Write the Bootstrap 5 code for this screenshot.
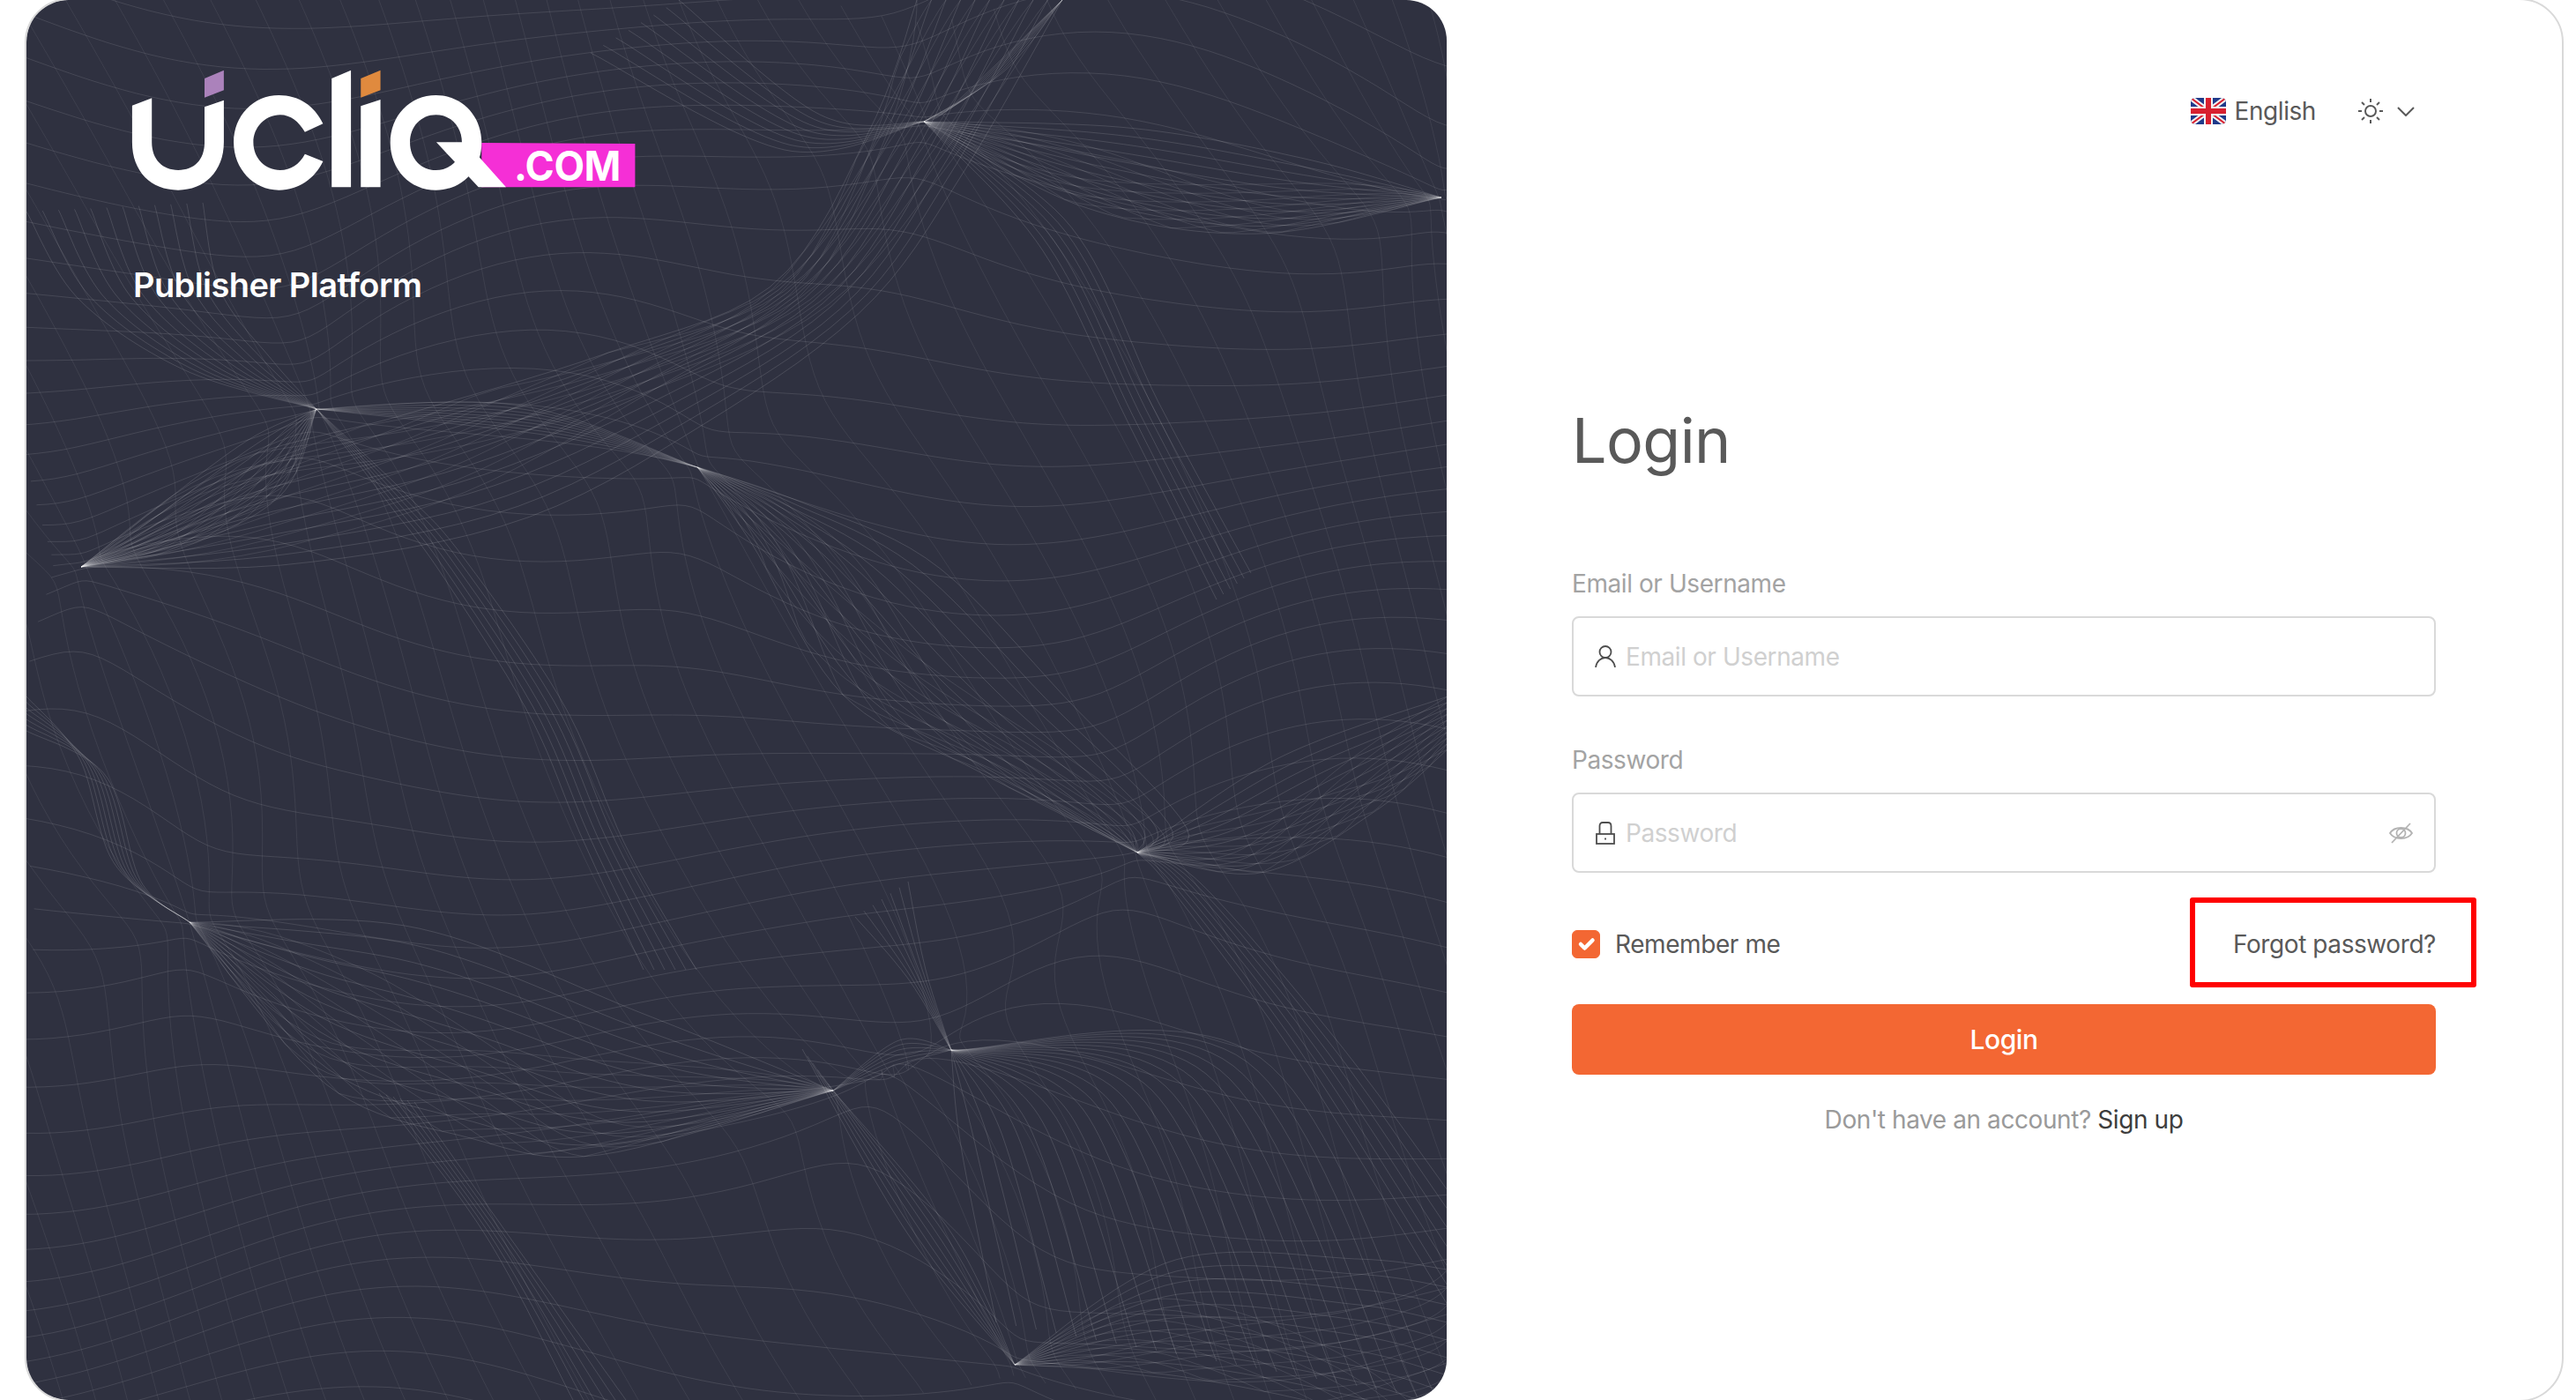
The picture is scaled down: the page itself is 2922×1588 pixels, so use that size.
<!DOCTYPE html>
<html lang="en">
<head>
  <meta charset="UTF-8">
  <meta name="viewport" content="width=device-width, initial-scale=1">
  <title>Ucliq.com - Publisher Platform</title>
  <link href="https://cdn.jsdelivr.net/npm/bootstrap@5.3.0/dist/css/bootstrap.min.css" rel="stylesheet">
  <style>
    html, body { height: 100%; overflow: hidden; }
    body { font-family: "Inter", "Liberation Sans", sans-serif; font-size: 28px; letter-spacing: -.42px; color: #595959; background: #fff; }
    .login-frame {
      width: 2880px; height: 1592px; margin: -2px 0 0 28px;
      border: 2px solid #d9d9d9; border-radius: 50px; overflow: hidden;
    }
    .brand-panel {
      width: 1611px; flex: none; background: #2f3140; border-radius: 46px;
      padding: 78px 0 0 119px; overflow: hidden;
    }
    .brand-mesh { left: 0; top: 0; }
    .brand-logo { display: block; margin-bottom: 83px; }
    .brand-title { font-size: 38px; font-weight: 600; line-height: 1.2; letter-spacing: -.58px; color: #fff; margin: 0 0 0 2px; }
    .login-side { flex: 1 1 auto; min-width: 0; }
    .login-top { height: 52px; margin-top: 100px; padding-right: 167px; }
    .flag-icon { border-radius: 5px; margin-right: 9px; }
    .theme-switch { margin-left: 48px; gap: 16px; }
    .login-form { width: 980px; margin-left: 142px; }
    .login-title { font-size: 70px; font-weight: 400; line-height: 80px; letter-spacing: -.6px; color: #595959; margin: 308px 0 105px; }
    .field-label { line-height: 34px; color: #a3a3a3; margin-bottom: 20px; }
    .login-field {
      height: 91px; border: 2px solid #d9d9d9; border-radius: 8px;
      padding: 0 24px; gap: 11px; margin-bottom: 55px;
    }
    .login-field.last-field { margin-bottom: 64px; }
    .login-field .form-control { font-size: 28px; letter-spacing: -.42px; color: #595959; background: transparent; }
    .login-field .form-control::placeholder { color: #d0d0d0; opacity: 1; }
    .remember-row { height: 34px; margin-bottom: 51px; }
    .remember-row .form-check { min-height: 0; padding: 0; margin: 0; gap: 17px; }
    .remember-row .form-check-input {
      width: 32px; height: 32px; margin: 0; float: none; border-radius: 6px;
      background-color: #f36733; border-color: #f36733; box-shadow: none;
    }
    .remember-row .form-check-label { line-height: 34px; color: #595959; }
    .forgot-link { color: #595959; text-decoration: none; line-height: 34px; }
    .note-box {
      position: absolute; left: -49px; right: -46px; top: -36px; bottom: -32px;
      border: 6px solid #f00; border-radius: 3px; pointer-events: none;
    }
    .login-btn {
      height: 80px; font-size: 30px; font-weight: 500; letter-spacing: -.42px; color: #fff;
      background: #f36733; border: 0; border-radius: 8px; margin-bottom: 34px;
    }
    .login-btn:hover { background: #f36733; color: #fff; }
    .signup-line { line-height: 34px; color: #9a9a9a; }
    .signup-line a { color: #3d3d3d; text-decoration: none; }
  </style>
</head>
<body>
  <div class="login-frame d-flex">
    <div class="brand-panel position-relative">
      <svg id="mesh" class="brand-mesh position-absolute" width="1611" height="1588" viewBox="0 0 1611 1588" fill="none" aria-hidden="true"></svg>

      <!-- logo, traced off the reference -->
      <svg class="brand-logo position-relative" width="574" height="140" viewBox="0 0 574 140" role="img" aria-label="ucliq.com">
        <g transform="scale(.4464 .3333) translate(-110 -115)">
          <polygon fill="#f52fd6" points="1000,367 1390,370 1390,518 1000,518"/>
          <path fill="#fff" d="M112 240 162 215V365C162 425 190 460 229 460 270 460 296 425 296 365V245L345 222V365C345 465 295 528 229 528 160 528 112 465 112 365Z"/>
          <polygon fill="#ab82bb" points="296,148 345,120 345,188 296,213"/>
          <path fill="#fff" d="M597 302 551 330C535 295 515 272 488 272 450 272 420 315 420 365 420 420 450 460 488 460 515 460 537 440 551 405L597 430C575 490 535 528 485 528 420 528 370 455 370 365 370 275 420 205 485 205 535 205 575 240 597 302Z"/>
          <polygon fill="#fff" points="619,148 668,120 668,518 619,518"/>
          <polygon fill="#fff" points="693,242 743,220 743,518 693,518"/>
          <polygon fill="#e08a3e" points="693,148 743,120 743,188 693,213"/>
          <path fill="#fff" fill-rule="evenodd" d="M884 205C950 205 1000 275 1000 366 1000 458 950 528 884 528 818 528 768 458 768 366 768 275 818 205 884 205ZM884 272C846 272 818 312 818 366 818 420 846 460 884 460 922 460 950 420 950 366 950 312 922 272 884 272Z"/>
          <polygon fill="#fff" points="885,365 960,365 1062,518 992,518"/>
        </g>
        <text x="434" y="127" fill="#fff" font-family="Inter, sans-serif" font-size="46" font-weight="700" textLength="121" lengthAdjust="spacingAndGlyphs">.COM</text>
      </svg>
      <h5 class="brand-title position-relative">Publisher Platform</h5>
    </div>

    <div class="login-side d-flex flex-column">
      <div class="login-top d-flex align-items-center justify-content-end">
        <svg class="flag-icon" width="40" height="30" viewBox="0 0 60 45">
          <rect width="60" height="45" fill="#1f3a8a"/>
          <path d="M0 0 60 45M60 0 0 45" stroke="#f2f2f2" stroke-width="9"/>
          <path d="M0 0 60 45M60 0 0 45" stroke="#d8202f" stroke-width="3"/>
          <path d="M30 0V45M0 22.5H60" stroke="#f2f2f2" stroke-width="15"/>
          <path d="M30 0V45M0 22.5H60" stroke="#d8202f" stroke-width="9"/>
        </svg>
        <span>English</span>
        <div class="theme-switch d-flex align-items-center">
          <svg width="28" height="28" viewBox="0 0 28 28" fill="none" stroke="#595959" stroke-width="2">
            <circle cx="14" cy="14" r="6"/>
            <path d="M14 0V4M14 24V28M0 14H4M24 14H28M4 4 7 7M21 21 24 24M24 4 21 7M7 21 4 24"/>
          </svg>
          <svg width="20" height="11" viewBox="0 0 20 11" fill="none" stroke="#595959" stroke-width="2"><path d="M1 1 10 10 19 1"/></svg>
        </div>
      </div>

      <form class="login-form" onsubmit="return false">
        <h1 class="login-title">Login</h1>

        <label class="field-label d-block" for="username">Email or Username</label>
        <div class="login-field d-flex align-items-center">
          <svg width="24" height="25" viewBox="0 0 24 25" fill="none" stroke="#4d4d4d" stroke-width="1.8" class="flex-shrink-0">
            <circle cx="12" cy="7.5" r="6.5"/>
            <path d="M1 25C2 18 7 14 12 14 17 14 22 18 23 25"/>
          </svg>
          <input type="text" class="form-control border-0 shadow-none p-0" id="username" placeholder="Email or Username">
        </div>

        <label class="field-label d-block" for="password">Password</label>
        <div class="login-field last-field d-flex align-items-center">
          <svg width="24" height="26" viewBox="0 0 24 26" fill="none" stroke="#4d4d4d" stroke-width="1.8" class="flex-shrink-0">
            <rect x="2" y="14" width="20" height="11"/>
            <path d="M5.5 14V5Q5.5 1 9 1H15Q18.5 1 18.5 5V14M12 18.5V20.5"/>
          </svg>
          <input type="password" class="form-control border-0 shadow-none p-0" id="password" placeholder="Password">
          <svg width="27" height="24" viewBox="0 0 27 24" fill="none" stroke="#b3b3b3" stroke-width="1.8" class="flex-shrink-0">
            <path d="M1 12C6 4 21 4 26 12 21 20 6 20 1 12Z"/>
            <circle cx="13.5" cy="12" r="5"/>
            <path d="M3 23 24 1"/>
          </svg>
        </div>

        <div class="remember-row d-flex align-items-center justify-content-between">
          <div class="form-check d-flex align-items-center">
            <input class="form-check-input" type="checkbox" id="remember" checked>
            <label class="form-check-label" for="remember">Remember me</label>
          </div>
          <a href="#" class="forgot-link position-relative">Forgot password?<span class="note-box"></span></a>
        </div>

        <button type="submit" class="btn login-btn w-100">Login</button>
        <p class="signup-line text-center mb-0">Don't have an account? <a href="#">Sign up</a></p>
      </form>
    </div>
  </div>

  <script src="https://cdn.jsdelivr.net/npm/bootstrap@5.3.0/dist/js/bootstrap.bundle.min.js"></script>
  <script>
    // background line art: a warped grid plus a few twisted ribbons
    const pins = [[1018,138],[329,464],[761,530],[62,643],[185,1046],[1049,1191],[1260,967],[1121,1548],[915,1237],[1605,224]];
    const W = 1611, H = 1588;

    function warp(x, y) {
      let nx = x, ny = y;
      pins.forEach(p => {
        const d2 = (p[0]-x)*(p[0]-x) + (p[1]-y)*(p[1]-y);
        const f = Math.exp(-d2 / (2*110*110)) * .8;
        nx += (p[0]-x) * f;
        ny += (p[1]-y) * f;
      });
      return [nx, ny];
    }

    function toPath(pts) {
      return 'M' + pts.map(p => p[0].toFixed(1) + ' ' + p[1].toFixed(1)).join('L');
    }

    // catmull-rom point on an open list, t from 0 to 1
    function onCurve(list, t) {
      const n = list.length - 1, u = Math.min(t * n, n - 1e-6), i = Math.floor(u), s = u - i;
      const a = list[Math.max(i-1, 0)], b = list[i], c = list[i+1], d = list[Math.min(i+2, n)];
      const at = k => .5 * (2*b[k] + (c[k]-a[k])*s + (2*a[k]-5*b[k]+4*c[k]-d[k])*s*s + (3*b[k]-a[k]-3*c[k]+d[k])*s*s*s);
      return [at(0), at(1)];
    }

    let out = '';
    function line(pts, alpha) {
      out += '<path d="' + toPath(pts) + '" stroke="#fff" stroke-opacity="' + alpha + '"/>';
    }

    // wavy horizontals
    for (let y0 = -140; y0 < H + 140; y0 += 38) {
      const pts = [];
      for (let x = -20; x <= W + 20; x += 16) {
        const y = y0 + 62*Math.sin(x/250 + y0/170) + 14*Math.sin(x/110 - y0/300);
        pts.push(warp(x, y));
      }
      line(pts, .11);
    }
    // slanted cross lines
    for (let x0 = -700; x0 < W + 100; x0 += 46) {
      const pts = [];
      for (let y = -20; y <= H + 20; y += 16) {
        const x = x0 + .42*y + 44*Math.sin(y/270 + x0/190);
        pts.push(warp(x, y));
      }
      line(pts, .07);
    }

    // fold a value back into 0..1 so cross lines bounce between the edges
    const fold = v => { const m = v % 2; return m > 1 ? 2 - m : m; };

    function ribbon(a, b, n, cross) {
      for (let i = 0; i <= n; i++) {
        const s = i / n, p1 = [], p2 = [];
        for (let j = 0; j <= 44; j++) {
          const t = j / 44, pa = onCurve(a, t), pb = onCurve(b, t);
          const f = fold(s + t);
          p1.push([pa[0] + (pb[0]-pa[0])*s, pa[1] + (pb[1]-pa[1])*s]);
          p2.push([pa[0] + (pb[0]-pa[0])*f, pa[1] + (pb[1]-pa[1])*f]);
        }
        line(p1, .13);
        if (cross) line(p2, .1);
      }
    }

    ribbon([[1018,138],[1250,145],[1450,180],[1605,224]], [[1018,138],[1200,235],[1400,265],[1605,224]], 10, true);
    ribbon([[1175,0],[1110,80],[1018,138]], [[1175,0],[1050,120],[1018,138]], 7);
    ribbon([[1018,138],[900,130],[740,0]], [[1018,138],[860,170],[640,60]], 7);
    ribbon([[1175,0],[1060,200],[950,350],[770,480],[560,590],[300,640],[62,643]], [[1010,0],[960,140],[850,320],[660,400],[430,470],[220,530],[62,643]], 10, true);
    ribbon([[0,240],[60,340],[180,420],[329,464]], [[200,230],[220,330],[280,410],[329,464]], 11);
    ribbon([[329,464],[250,500],[130,590],[62,643]], [[329,464],[290,560],[180,620],[62,643]], 8, true);
    ribbon([[329,464],[560,460],[761,530]], [[329,464],[600,495],[761,530]], 8);
    ribbon([[329,464],[430,560],[494,630],[610,800],[680,960],[760,1100]], [[329,464],[410,570],[470,650],[570,810],[630,950],[700,1100]], 5);
    ribbon([[761,530],[880,570],[1030,640],[1183,796],[1317,941],[1260,967]], [[761,530],[823,617],[926,788],[1080,875],[1260,967]], 10, true);
    ribbon([[1018,138],[1183,255],[1286,460],[1389,650]], [[1018,138],[1150,280],[1250,480],[1350,680]], 5);
    ribbon([[1260,967],[1330,1000],[1487,1181],[1612,1350]], [[1260,967],[1300,1010],[1440,1200],[1612,1480]], 6);
    ribbon([[185,1046],[440,1052],[700,1150],[915,1237]], [[185,1046],[340,1230],[500,1290],[650,1310],[915,1237]], 11, true);
    ribbon([[0,829],[90,880],[130,1000],[185,1046]], [[0,790],[60,860],[100,980],[185,1046]], 6);
    ribbon([[915,1237],[980,1210],[1049,1191]], [[915,1237],[990,1180],[1049,1191]], 5);
    ribbon([[1049,1191],[1020,1100],[1000,1000]], [[1049,1191],[1000,1110],[940,1040]], 6);
    ribbon([[915,1237],[1050,1400],[1121,1548]], [[880,1190],[1000,1400],[1121,1548]], 6);
    ribbon([[400,1240],[520,1400],[620,1588]], [[440,1250],[560,1420],[680,1588]], 5);
    ribbon([[1121,1548],[1300,1430],[1510,1428],[1612,1440]], [[1121,1548],[1300,1560],[1500,1600],[1612,1640]], 10, true);
    ribbon([[1260,967],[1420,860],[1612,790]], [[1260,967],[1400,990],[1530,920],[1612,850]], 9, true);
    ribbon([[1049,1191],[1060,1300],[1100,1500]], [[1049,1191],[1400,1200],[1600,1588]], 22);

    document.getElementById('mesh').innerHTML = out;
  </script>
</body>
</html>
